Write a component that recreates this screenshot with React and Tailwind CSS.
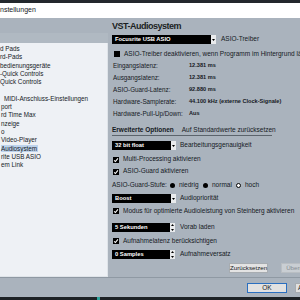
import React from 'react';

const Check = ({ checked = true }) => (
  <span className="w-[6px] h-[6px] bg-black flex items-center justify-center shrink-0">
    {checked && (
      <svg width="6" height="6" viewBox="0 0 6 6">
        <path d="M1.1 3.3 L2.4 4.5 L4.9 1.4" stroke="white" strokeWidth="1.1" fill="none" />
      </svg>
    )}
  </span>
);

const Arrow = () => (
  <span className="w-[5px] h-full bg-[#e9ebed] flex items-center justify-center shrink-0">
    <svg width="3" height="2" viewBox="0 0 3 2"><path d="M0 0 H3 L1.5 2 Z" fill="black" /></svg>
  </span>
);

const Select = ({ value, width }) => (
  <div className={`flex items-center bg-black h-full shrink-0 ${width}`}>
    <span className="flex-1 pl-[3px] text-white font-bold text-[5.8px] leading-none whitespace-nowrap">{value}</span>
    <Arrow />
  </div>
);

const Spinner = ({ value }) => (
  <div className="flex h-full shrink-0">
    <div className="w-[58px] bg-black flex items-center pl-[3px] text-white font-bold text-[5.8px] leading-none">{value}</div>
    <div className="w-[5px] bg-[#e9ebed] flex flex-col justify-around items-center">
      <svg width="3" height="2" viewBox="0 0 3 2"><path d="M0 2 H3 L1.5 0 Z" fill="black" /></svg>
      <svg width="3" height="2" viewBox="0 0 3 2"><path d="M0 0 H3 L1.5 2 Z" fill="black" /></svg>
    </div>
  </div>
);

const Radio = ({ on }) => (
  <span className={`w-[5px] h-[5px] rounded-full shrink-0 ${on ? 'bg-black' : 'bg-white border border-black'}`} />
);

const treeItems = [
  ['d Pads', 'pl-0'],
  ['rd-Pads', 'pl-0'],
  ['bedienungsgeräte', 'pl-0'],
  ['-Quick Controls', 'pl-0'],
  ['Quick Controls', 'pl-0'],
  ['', 'pl-0'],
  ['MIDI-Anschluss-Einstellungen', 'pl-[4px]'],
  ['port', 'pl-[1px]'],
  ['rd Time Max', 'pl-[1px]'],
  ['nzeige', 'pl-[1px]'],
  ['o', 'pl-[1px]'],
  ['Video-Player', 'pl-[1px]'],
  ['Audiosystem', 'pl-[1px]'],
  ['rite USB ASIO', 'pl-[1px]'],
  ['em Link', 'pl-[1px]'],
];

const infoRows = [
  ['Eingangslatenz:', '12.381 ms'],
  ['Ausgangslatenz:', '12.381 ms'],
  ['ASIO-Guard-Latenz:', '92.880 ms'],
  ['Hardware-Samplerate:', '44.100 kHz (externe Clock-Signale)'],
  ['Hardware-Pull-Up/Down:', 'Aus'],
];

export default function App() {
  return (
    <div className="w-[300px] h-[300px] overflow-hidden bg-[#aab3bd] text-[#15191d] font-['Liberation_Sans',Arial,sans-serif] flex flex-col">
      <div className="h-[3px] bg-[#23282d] shrink-0" />
      <div className="h-[15px] bg-white flex items-center text-[7px] shrink-0">
        <span>nstellungen</span>
      </div>

      <div className="h-[259px] flex shrink-0">
        {/* tree */}
        <div className="w-[108px] flex flex-col shrink-0">
          <div className="h-[15px] shrink-0" />
          <div className="h-[10px] bg-[#b0b9c2] shrink-0" />
          <div className="flex-1 bg-[#eef1f5] border-r border-b border-[#dfe4e9] pt-[2px] text-[6.3px] leading-[8.3px] whitespace-nowrap overflow-hidden">
            {treeItems.map(([label, pad], i) => (
              <div key={i} className={`h-[8.3px] ${pad}`}>
                {label === 'Audiosystem' ? (
                  <span className="bg-[#bdd3ec] pr-[1px]">{label}</span>
                ) : (
                  label
                )}
              </div>
            ))}
          </div>
        </div>

        {/* settings */}
        <div className="flex-1 pl-[4px] flex flex-col text-[6.5px] leading-none whitespace-nowrap overflow-hidden">
          <div className="h-[16px] flex items-center text-[9px] font-bold tracking-[-0.5px] text-[#1b1f23]">VST-Audiosystem</div>
          <div className="h-[9px] mt-[1px] flex items-center gap-[5px]">
            <Select value="Focusrite USB ASIO" width="w-[104px]" />
            <span>ASIO-Treiber</span>
          </div>

          <div className="h-[12px] mt-[4px] flex items-center gap-[4px] pl-[2px]">
            <Check checked={false} />
            <span>ASIO-Treiber deaktivieren, wenn Programm im Hintergrund läuft</span>
          </div>

          {infoRows.map(([label, value]) => (
            <div key={label} className="h-[12px] flex items-center">
              <span className="w-[77px] pl-[1px] text-[6.3px]">{label}</span>
              <span className="font-bold text-[5.6px]">{value}</span>
            </div>
          ))}

          <div className="h-[16px] w-[160px] flex items-end border-b border-[#5c646c]">
            <span className="font-bold pb-[2px] pr-[6px]">Erweiterte Optionen</span>
            <span className="pb-[2px] ml-[2px]">Auf Standardwerte zurücksetzen</span>
          </div>

          <div className="h-[9px] mt-[5px] flex items-center gap-[4px]">
            <Select value="32 bit float" width="w-[64px]" />
            <span>Bearbeitungsgenauigkeit</span>
          </div>

          <div className="h-[11px] mt-[4px] flex items-center gap-[4px] pl-[1px]">
            <Check />
            <span>Multi-Processing aktivieren</span>
          </div>
          <div className="h-[11px] mt-[1px] flex items-center gap-[4px] pl-[1px]">
            <Check />
            <span>ASIO-Guard aktivieren</span>
          </div>

          <div className="h-[10px] mt-[3px] flex items-center">
            <span className="w-[58px]">ASIO-Guard-Stufe:</span>
            <span className="w-[33px] flex items-center gap-[4px]"><Radio on /><span>niedrig</span></span>
            <span className="w-[33px] flex items-center gap-[4px]"><Radio on /><span>normal</span></span>
            <span className="flex items-center gap-[4px]"><Radio /><span>hoch</span></span>
          </div>

          <div className="h-[9px] mt-[4px] flex items-center gap-[4px]">
            <Select value="Boost" width="w-[64px]" />
            <span>Audiopriorität</span>
          </div>

          <div className="h-[10px] mt-[3px] flex items-center gap-[4px] pl-[1px]">
            <Check />
            <span>Modus für optimierte Audioleistung von Steinberg aktivieren</span>
          </div>

          <div className="h-[9px] mt-[7px] flex items-center gap-[5px]">
            <Spinner value="5 Sekunden" />
            <span>Vorab laden</span>
          </div>

          <div className="h-[10px] mt-[4px] flex items-center gap-[4px] pl-[1px]">
            <Check />
            <span>Aufnahmelatenz berücksichtigen</span>
          </div>

          <div className="h-[9px] mt-[4px] flex items-center gap-[5px]">
            <Spinner value="0 Samples" />
            <span>Aufnahmeversatz</span>
          </div>

          <div className="h-[10px] mt-[4px] flex items-center">
            <button className="ml-[117px] w-[43px] h-full bg-[#e3e3e3] border border-[#a7acb1] text-[6.2px] leading-none">Zurücksetzen</button>
            <button className="ml-[13px] w-[40px] h-full bg-[#c9ced3] border border-[#b9bec3] text-[6.2px] leading-none text-[#868c92] text-left pl-[4px]">Übernehmen</button>
          </div>
        </div>
      </div>

      <div className="h-[20px] border-t border-[#8f99a3] flex items-start pt-[5px] pl-[247px] gap-[8px] text-[6.5px] leading-none shrink-0 overflow-hidden">
        <button className="w-[40px] h-[10px] shrink-0 bg-[#e1e1e1] border border-[#2a6fc0]">OK</button>
        <button className="w-[40px] h-[10px] shrink-0 bg-[#e1e1e1] border border-[#a7acb1] text-left pl-[2px]">Abbrechen</button>
      </div>
      <div className="h-[3px] bg-[#1d2226] shrink-0 flex">
        <div className="w-[97px]" />
        <div className="w-[3px] bg-[#2aa39c]" />
      </div>
    </div>
  );
}
